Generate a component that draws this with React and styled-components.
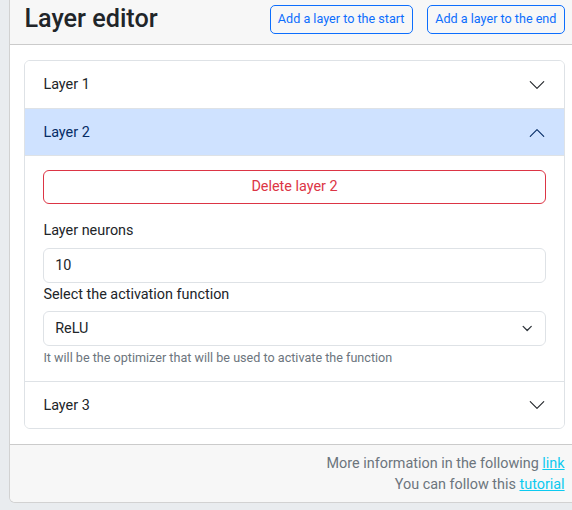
import React from "react";
import styled, { createGlobalStyle } from "styled-components";

const Global = createGlobalStyle`
  html, body { margin: 0; padding: 0; }
  body {
    background: #e9ecef;
    font-family: Roboto, "Noto Sans", sans-serif;
    font-size: 14.4px;
    line-height: 1.5;
    color: #212529;
    overflow: hidden;
  }
  * { box-sizing: border-box; }
`;

const Page = styled.div`
  padding-left: 9px;
  width: 600px;
`;

const Card = styled.div`
  width: 571px;
  background: #fff;
  border: 1px solid rgba(0, 0, 0, 0.175);
  border-top-width: 0;
  border-radius: 0 0 6px 6px;
  display: flex;
  flex-direction: column;
`;

const CardHeader = styled.div`
  height: 45px;
  padding: 0 14.4px 5px;
  background: #f7f7f7;
  border-bottom: 1px solid rgba(0, 0, 0, 0.175);
  display: flex;
  align-items: center;
  justify-content: space-between;
`;

const Title = styled.h3`
  margin: 0 0 1px;
  font-size: 25.2px;
  font-weight: 500;
  line-height: 1.2;
`;

const Actions = styled.div`
  display: flex;
  gap: 14.4px;
`;

const OutlineButton = styled.button`
  font-family: inherit;
  font-size: ${(p) => (p.$small ? "12.6px" : "14.4px")};
  line-height: 1.5;
  padding: ${(p) => (p.$small ? "3.6px 7.2px" : "5.4px 10.8px")};
  color: ${(p) => p.$color};
  background: transparent;
  border: 1px solid ${(p) => p.$color};
  border-radius: ${(p) => (p.$small ? "5px" : "6px")};
  width: ${(p) => (p.$block ? "100%" : "auto")};
  cursor: pointer;
`;

const CardBody = styled.div`
  padding: 15px 14.4px 14.4px;
`;

const Accordion = styled.div`
  border: 1px solid #dee2e6;
  border-radius: 6px;
  overflow: hidden;
`;

const Item = styled.div`
  & + & {
    border-top: 1px solid #dee2e6;
  }
`;

const ItemHeader = styled.button`
  width: 100%;
  display: flex;
  align-items: center;
  justify-content: space-between;
  padding: 13px 18px 12.2px;
  font-family: inherit;
  font-size: 14.4px;
  line-height: 1.5;
  text-align: left;
  border: 0;
  background: ${(p) => (p.$open ? "#cfe2ff" : "#fff")};
  color: ${(p) => (p.$open ? "#052c65" : "#212529")};
  box-shadow: ${(p) => (p.$open ? "inset 0 -1px 0 #dee2e6" : "none")};
  cursor: pointer;
`;

const Chevron = styled.svg`
  width: 18px;
  height: 18px;
  flex-shrink: 0;
  transform: ${(p) => (p.$open ? "rotate(-180deg)" : "none")};
`;

const ItemBody = styled.div`
  padding: 14.4px 18px 13px;
`;

const Field = styled.div`
  margin-top: ${(p) => p.$mt || "0"};
`;

const Label = styled.label`
  display: block;
  padding-top: 1px;
  margin-bottom: 6.2px;
`;

const Input = styled.input`
  display: block;
  width: 100%;
  font-family: inherit;
  font-size: 14.4px;
  line-height: 1.5;
  padding: 5.4px 10.8px;
  color: #212529;
  background: #fff;
  border: 1px solid #dee2e6;
  border-radius: 6px;
  outline: none;
`;

const SelectWrap = styled.div`
  position: relative;
`;

const Select = styled.select`
  display: block;
  width: 100%;
  appearance: none;
  font-family: inherit;
  font-size: 14.4px;
  line-height: 1.5;
  padding: 5.4px 36px 5.4px 10.8px;
  color: #212529;
  background: #fff;
  border: 1px solid #dee2e6;
  border-radius: 6px;
  outline: none;
`;

const SelectArrow = styled.svg`
  position: absolute;
  right: 10.8px;
  top: 50%;
  margin-top: -5.4px;
  width: 14.4px;
  height: 10.8px;
  pointer-events: none;
`;

const Help = styled.div`
  margin-top: 3px;
  font-size: 12.6px;
  color: #6c757d;
`;

const CardFooter = styled.div`
  padding: 8px 14.4px 6.4px;
  background: #f7f7f7;
  border-top: 1px solid rgba(0, 0, 0, 0.175);
  border-radius: 0 0 5px 5px;
  text-align: right;
  color: #6c757d;
`;

const FooterLine = styled.div``;

const Link = styled.a`
  color: #0dcaf0;
  text-decoration: underline;
`;

const ChevronIcon = ({ open }) => (
  <Chevron $open={open} viewBox="0 0 16 16" fill="none">
    <path
      d="M2 5L8 11L14 5"
      stroke={open ? "#052c65" : "#212529"}
      strokeLinecap="round"
      strokeLinejoin="round"
    />
  </Chevron>
);

const layers = [
  { name: "Layer 1", open: false },
  { name: "Layer 2", open: true },
  { name: "Layer 3", open: false },
];

export default function App() {
  return (
    <>
      <Global />
      <Page>
        <Card>
          <CardHeader>
            <Title>Layer editor</Title>
            <Actions>
              <OutlineButton $small $color="#0d6efd">
                Add a layer to the start
              </OutlineButton>
              <OutlineButton $small $color="#0d6efd">
                Add a layer to the end
              </OutlineButton>
            </Actions>
          </CardHeader>
          <CardBody>
            <Accordion>
              {layers.map((l) => (
                <Item key={l.name}>
                  <ItemHeader $open={l.open}>
                    <span>{l.name}</span>
                    <ChevronIcon open={l.open} />
                  </ItemHeader>
                  {l.open && (
                    <ItemBody>
                      <OutlineButton $block $color="#dc3545">
                        Delete layer 2
                      </OutlineButton>
                      <Field $mt="15px">
                        <Label>Layer neurons</Label>
                        <Input type="number" defaultValue="10" />
                      </Field>
                      <Field>
                        <Label>Select the activation function</Label>
                        <SelectWrap>
                          <Select defaultValue="relu">
                            <option value="relu">ReLU</option>
                            <option value="sigmoid">Sigmoid</option>
                            <option value="tanh">Tanh</option>
                          </Select>
                          <SelectArrow viewBox="0 0 16 16" fill="none">
                            <path
                              d="m2 5 6 6 6-6"
                              stroke="#343a40"
                              strokeWidth="2"
                              strokeLinecap="round"
                              strokeLinejoin="round"
                            />
                          </SelectArrow>
                        </SelectWrap>
                        <Help>
                          It will be the optimizer that will be used to activate
                          the function
                        </Help>
                      </Field>
                    </ItemBody>
                  )}
                </Item>
              ))}
            </Accordion>
          </CardBody>
          <CardFooter>
            <FooterLine>
              More information in the following <Link href="#">link</Link>
            </FooterLine>
            <FooterLine>
              You can follow this <Link href="#">tutorial</Link>
            </FooterLine>
          </CardFooter>
        </Card>
      </Page>
    </>
  );
}
